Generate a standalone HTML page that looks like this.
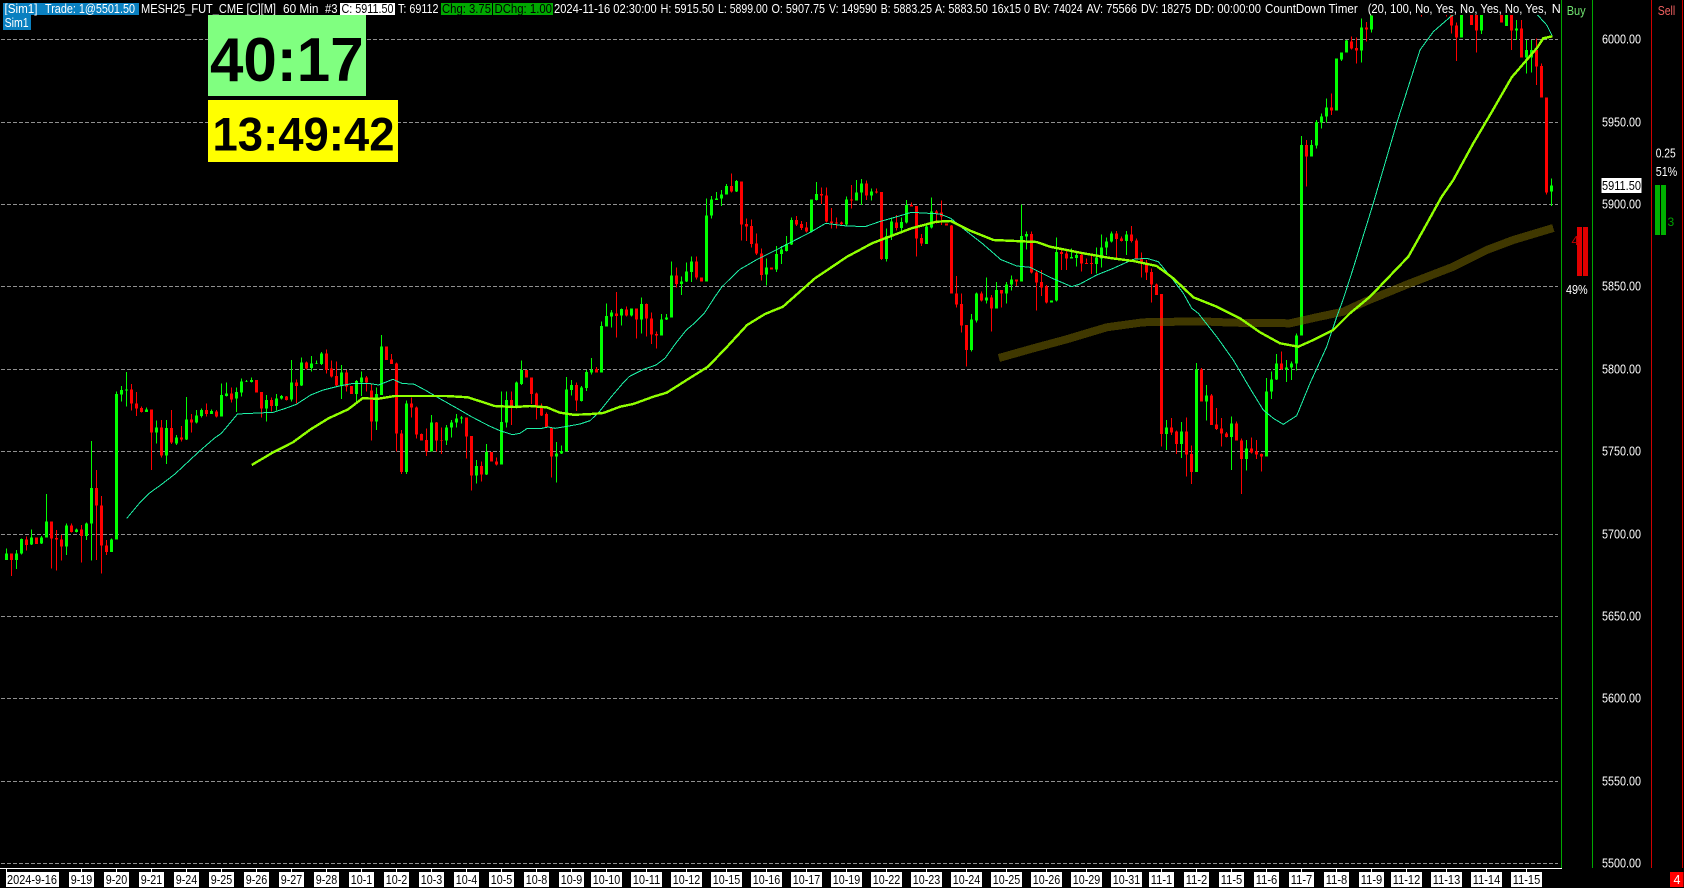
<!DOCTYPE html>
<html><head><meta charset="utf-8"><title>MESH25 chart</title>
<style>
html,body{margin:0;padding:0;background:#000;width:1684px;height:888px;overflow:hidden}
svg{display:block;position:absolute;left:0;top:0}
text{font-family:"Liberation Sans",sans-serif;font-size:12.5px;fill:#fff}
.c path{vector-effect:non-scaling-stroke;fill:none;stroke-linecap:butt}
.c{shape-rendering:crispEdges}
.gw{stroke:#00ff00;stroke-width:1}.gb{stroke:#00ff00;stroke-width:3}
.rw{stroke:#ff0000;stroke-width:1}.rb{stroke:#ff0000;stroke-width:3}
.k text{fill:#000}
</style></head><body>
<svg width="1684" height="888" viewBox="0 0 1684 888" xmlns="http://www.w3.org/2000/svg">
<defs>
<clipPath id="ch"><rect x="1" y="15" width="1560" height="853"/></clipPath>
<clipPath id="ax"><rect x="1593" y="0" width="58" height="868"/></clipPath>
<clipPath id="hd"><rect x="0" y="0" width="1561" height="20"/></clipPath>
</defs>
<rect width="1684" height="888" fill="#000"/>
<!-- grid -->
<path d="M1 39.5H1558M1 122.5H1558M1 204.5H1558M1 286.5H1558M1 369.5H1558M1 451.5H1558M1 534.5H1558M1 616.5H1558M1 698.5H1558M1 781.5H1558M1 863.5H1558" stroke="#909090" stroke-width="1" stroke-dasharray="4 2" fill="none" shape-rendering="crispEdges"/>
<g clip-path="url(#ch)">
<g class="c" transform="translate(0 340) scale(1 .33333)">
<path class="gw" d="M6.5 625V660M16.5 630V687M21.5 595V643M31.5 568V615M41.5 588V612M46.5 462V592M66.5 550V645M76.5 565V578M86.5 548V600M91.5 303V662M111.5 595V636M116.5 155V598M121.5 138V185M126.5 96V200M146.5 202V216M156.5 242V310M166.5 240V372M176.5 285V315M186.5 171V300M196.5 210V250M201.5 206V232M211.5 208V222M221.5 130V230M226.5 128V170M236.5 142V216M241.5 115V170M246.5 120V126M251.5 112V128M266.5 165V245M276.5 162V212M281.5 165V178M291.5 60V185M301.5 52V138M311.5 48V95M316.5 62V72M321.5 36V75M341.5 75V177M356.5 120V185M361.5 95V168M376.5 142V270M381.5 -15V165M406.5 182V402M431.5 225V335M446.5 255V315M451.5 240V292M456.5 222V262M461.5 228V250M476.5 360V430M486.5 312V405M501.5 155V374M506.5 155V262M516.5 125V205M521.5 62V135M556.5 306V428"/>
<path class="gb" d="M6.5 640V660M16.5 640V660M21.5 597V640M31.5 592V613M41.5 592V610M46.5 544V592M66.5 556V620M76.5 568V576M86.5 550V588M91.5 444V550M111.5 598V636M116.5 162V598M121.5 150V164M126.5 148V152M146.5 208V216M156.5 262V278M166.5 264V346M176.5 292V310M186.5 238V298M196.5 226V248M201.5 210V228M211.5 213V222M221.5 165V230M226.5 160V168M236.5 156V176M241.5 124V158M246.5 123V125M251.5 120V126M266.5 180V206M276.5 175V198M281.5 168V176M291.5 127V178M301.5 67V137M311.5 70V84M316.5 69V71M321.5 40V72M341.5 97V137M356.5 123V162M361.5 112V128M376.5 162V244M381.5 20V165M406.5 190V396M431.5 247V334M446.5 262V302M451.5 247V262M456.5 235V248M461.5 232V235M476.5 378V406M486.5 336V404M501.5 246V374M506.5 180V248M516.5 128V198M521.5 90V132M556.5 340V350"/>
<path class="rw" d="M11.5 640V708M26.5 590V632M51.5 544V685M56.5 570V692M61.5 585V662M71.5 550V578M81.5 555V668M96.5 390V660M101.5 468V700M106.5 600V645M131.5 132V212M136.5 156V228M141.5 200V218M151.5 208V390M161.5 240V352M171.5 210V312M181.5 258V305M191.5 222V278M206.5 190V230M216.5 210V232M231.5 142V188M261.5 156V233M271.5 172V215M286.5 168V182M296.5 118V190M306.5 65V88M326.5 28V100M331.5 62V112M336.5 65V140M346.5 90V155M366.5 108V155M371.5 130V302M391.5 42V72M396.5 68V335M401.5 270V402M411.5 172V232M416.5 200V296M421.5 280V302M426.5 265V348M436.5 246V335M441.5 262V342M466.5 232V355M471.5 288V452M481.5 365V425M496.5 352V376M511.5 155V255M531.5 112V192M536.5 158V238M541.5 190V228M546.5 218V262M551.5 262V412"/>
<path class="rb" d="M11.5 640V660M26.5 598V615M36.5 592V612M51.5 544V596M56.5 594V598M61.5 598V620M71.5 556V576M81.5 568V588M96.5 444V497M101.5 496V616M106.5 616V636M131.5 148V190M136.5 190V206M141.5 204V216M151.5 208V278M161.5 262V346M171.5 264V308M181.5 292V298M191.5 238V248M206.5 210V222M216.5 214V230M231.5 160V178M256.5 120V158M261.5 156V206M271.5 180V198M286.5 170V180M296.5 127V138M306.5 67V85M326.5 40V90M331.5 85V110M336.5 108V137M346.5 97V140M351.5 138V162M366.5 112V128M371.5 152V244M386.5 20V60M391.5 58V72M396.5 70V280M401.5 280V396M411.5 190V203M416.5 203V284M421.5 282V302M426.5 300V334M436.5 248V302M441.5 300V302M466.5 232V290M471.5 288V406M481.5 378V404M491.5 336V365M496.5 364V374M511.5 180V198M526.5 90V112M531.5 112V162M536.5 160V198M541.5 198V226M546.5 222V262M551.5 262V350"/>
</g>
<g class="c" transform="translate(0 330) scale(1 .33333)">
<path class="gw" d="M561.5 346V372M566.5 141V365M571.5 150V197M581.5 168V215M586.5 120V183M591.5 84V134"/>
<path class="gb" d="M561.5 363V371M566.5 178V365M571.5 165V180M581.5 172V213M586.5 126V174M591.5 120V128"/>
<path class="rw" d="M576.5 157V243M596.5 111V128"/>
<path class="rb" d="M576.5 165V212M596.5 117V128"/>
</g>
<g class="c" transform="translate(0 160) scale(1 .33333)">
<path class="gw" d="M601.5 484V638M606.5 430V500M611.5 450V503M621.5 445V497M631.5 445V470M641.5 412V520M661.5 462V527M666.5 462V480M671.5 304V472M681.5 350V405M686.5 308V366M691.5 290V366M706.5 115V365M711.5 108V176M716.5 96V120M721.5 90V138M726.5 72V104M736.5 60V96M766.5 295V377M776.5 258V336M781.5 258V312M786.5 228V275M791.5 172V255M811.5 118V217M816.5 66V122M846.5 110V197M856.5 60V122M861.5 57V135M871.5 85V122M886.5 205V305M891.5 172V240M901.5 172V218M906.5 120V190M926.5 195V252M931.5 112V205M971.5 462V575M976.5 397V487M986.5 352V430M996.5 366V446M1006.5 366V430M1011.5 346V392M1021.5 134V365M1026.5 215V268M1056.5 232V424M1071.5 265V296M1076.5 275V320M1096.5 262V340"/>
<path class="gb" d="M601.5 498V638M606.5 468V500M611.5 458V470M621.5 447V467M631.5 445V467M641.5 432V478M661.5 478V527M666.5 472V478M671.5 346V472M681.5 364V372M686.5 334V364M691.5 304V336M706.5 166V365M711.5 118V166M716.5 115V120M721.5 103V116M726.5 78V104M736.5 63V94M766.5 322V344M776.5 282V328M781.5 268V282M786.5 252V273M791.5 180V254M811.5 118V215M816.5 102V120M846.5 118V194M856.5 97V122M861.5 70V98M871.5 95V107M886.5 228V297M891.5 185V228M901.5 186V204M906.5 135V188M926.5 200V252M931.5 154V203M971.5 478V570M976.5 400V482M986.5 412V422M996.5 390V446M1006.5 373V400M1011.5 358V374M1021.5 228V365M1026.5 222V230M1051.5 421V428M1056.5 276V422M1071.5 291V296M1076.5 285V294M1096.5 292V312"/>
<path class="rw" d="M616.5 396V533M626.5 440V470M636.5 445V536M646.5 430V530M651.5 458V552M656.5 515V566M676.5 322V382M696.5 290V358M731.5 40V97M741.5 64V242M746.5 175V243M751.5 178V263M756.5 220V285M761.5 266V362M796.5 168V198M801.5 183V210M806.5 186V217M821.5 82V132M826.5 82V188M831.5 144V205M836.5 172V206M841.5 185V195M851.5 75V145M866.5 62V120M876.5 85V100M881.5 96V300M896.5 165V212M911.5 128V140M916.5 138V290M921.5 222V258M936.5 150V190M941.5 122V195M951.5 195V400M956.5 348V442M961.5 400V518M966.5 495V620M981.5 395V425M991.5 405V515M1001.5 390V442M1016.5 358V378M1031.5 215V340M1036.5 330V452M1041.5 330V408M1046.5 375V430M1061.5 270V330M1066.5 272V330M1081.5 280V335M1086.5 295V312M1091.5 285V342"/>
<path class="rb" d="M616.5 460V468M626.5 448V467M636.5 445V478M646.5 432V475M651.5 475V524M656.5 522V526M676.5 346V372M696.5 304V352M701.5 352V364M731.5 78V95M741.5 64V194M746.5 192V200M751.5 198V252M756.5 250V280M761.5 280V345M771.5 322V328M796.5 180V194M801.5 192V204M806.5 202V215M821.5 102V107M826.5 106V185M831.5 184V189M836.5 188V191M841.5 188V192M851.5 118V122M866.5 70V106M876.5 94V98M881.5 96V297M896.5 187V204M911.5 135V140M916.5 138V236M921.5 234V251M936.5 154V160M941.5 157V170M946.5 190V197M951.5 196V400M956.5 400V434M961.5 432V497M966.5 495V570M981.5 400V422M991.5 412V446M1001.5 390V400M1016.5 358V364M1031.5 222V338M1036.5 338V368M1041.5 366V382M1046.5 380V428M1061.5 276V282M1066.5 280V296M1081.5 285V310M1086.5 309V312M1091.5 309V312"/>
</g>
<g class="c" transform="translate(0 180) scale(1 .33333)">
<path class="gw" d="M1101.5 163V262M1106.5 172V225M1111.5 155V187M1126.5 153V225M1166.5 720V810M1181.5 726V834M1196.5 549V876M1206.5 615V722M1231.5 709V870M1246.5 780V872M1266.5 594V830M1271.5 574V657M1276.5 522V600M1286.5 540V606M1291.5 545V600M1296.5 460V572"/>
<path class="gb" d="M1101.5 202V235M1106.5 184V203M1111.5 160V185M1126.5 163V183M1166.5 742V762M1181.5 754V792M1196.5 568V876M1206.5 646V665M1231.5 730V771M1246.5 805V837M1266.5 634V830M1271.5 598V635M1276.5 550V598M1286.5 562V568M1291.5 550V563M1296.5 466V551"/>
<path class="rw" d="M1116.5 153V235M1121.5 170V185M1131.5 138V187M1136.5 175V238M1141.5 217V293M1146.5 240V300M1151.5 266V368M1156.5 310V345M1161.5 342V800M1171.5 714V765M1176.5 752V822M1186.5 712V890M1191.5 796V912M1201.5 564V665M1211.5 642V735M1216.5 684V750M1221.5 714V800M1226.5 756V773M1236.5 724V782M1241.5 775V942M1251.5 772V820M1256.5 780V837M1261.5 820V875M1281.5 514V570"/>
<path class="rb" d="M1116.5 160V177M1121.5 175V183M1131.5 163V183M1136.5 181V235M1141.5 235V248M1146.5 248V278M1151.5 276V314M1156.5 313V345M1161.5 342V762M1171.5 742V758M1176.5 755V792M1186.5 754V824M1191.5 822V876M1201.5 568V665M1211.5 646V735M1216.5 733V747M1221.5 745V761M1226.5 760V771M1236.5 730V782M1241.5 781V837M1251.5 805V818M1256.5 814V824M1261.5 822V830M1281.5 550V567"/>
</g>
<g class="c" transform="scale(1 .33333)">
<path class="gw" d="M1301.5 408V1007M1311.5 420V470M1316.5 360V446M1321.5 340V386M1326.5 295V367M1336.5 175V332M1341.5 158V183M1346.5 120V158M1361.5 55V188M1371.5 46V98M1461.5 45V113M1481.5 45V102M1506.5 45V78M1516.5 60V120M1526.5 120V220M1531.5 120V218M1551.5 535V618"/>
<path class="gb" d="M1301.5 435V1007M1311.5 435V470M1316.5 366V437M1321.5 350V367M1326.5 322V350M1336.5 175V332M1341.5 158V178M1346.5 122V158M1361.5 82V152M1371.5 46V88M1461.5 45V113M1481.5 45V92M1506.5 45V78M1516.5 85V92M1526.5 150V172M1531.5 150V172M1551.5 556V575"/>
<path class="rw" d="M1306.5 420V560M1331.5 280V345M1351.5 110V148M1356.5 112V190M1366.5 66V125M1421.5 45V50M1446.5 45V50M1451.5 45V100M1456.5 68V183M1471.5 45V75M1476.5 45V158M1501.5 45V68M1511.5 45V150M1521.5 60V172M1536.5 115V255M1541.5 190V293M1546.5 292V583"/>
<path class="rb" d="M1306.5 435V470M1331.5 322V332M1351.5 124V146M1356.5 144V152M1366.5 82V88M1451.5 45V77M1456.5 77V113M1471.5 45V75M1476.5 45V92M1501.5 45V68M1511.5 45V92M1521.5 85V172M1536.5 150V200M1541.5 198V293M1546.5 292V578"/>
</g>
<!-- curves -->
<polyline shape-rendering="crispEdges" fill="none" stroke="#807000" stroke-opacity=".5" stroke-width="8" points="998.9,358 1033.3,348.3 1066.7,339.3 1106.7,327.3 1143.3,322.3 1200,321.3 1233.3,322.7 1290,323.3 1316.7,317.3 1343.3,311.7 1366.7,301 1408.3,284 1453.3,266.7 1486.7,250 1513.3,240 1553.3,228"/>
<polyline shape-rendering="crispEdges" fill="none" stroke="#1ef2a8" stroke-width="1" points="126.8,518.3 139.3,503.3 150,492.7 160.7,485 175,474 185.7,464 200,450.7 214.3,438.3 221.4,433.3 237.5,414 273.2,412.3 285.7,408.3 296.4,404.3 310.7,395 323.2,390 339.3,386 353.6,383.3 367.9,383.3 378.6,385 392.9,379.3 401.8,383.3 414.3,384.3 425,390 439.3,398.3 457,408.3 471.4,416.7 489.3,426 500,430.7 512.5,434.7 520,433.3 527.3,428.3 542,428.3 548,427 555,428.3 565,426.7 580,424 590,420.7 599.3,411.7 610,398.3 623.3,382.7 629,376.7 643.6,369.3 656,365 665,358.3 675.7,343.3 686.4,330 695.4,322.3 704.3,313.3 715,296.7 722,286.7 734.6,274.3 740,269.3 757.9,259 779.3,248.3 811.4,231.7 825.7,223.3 843.6,225.7 865,226.7 879.3,221.7 897,216.7 911.4,212.3 940,214 950.7,218.3 965,230 982.9,244 1000.7,259.5 1016.7,266 1030,267.3 1050,277.3 1071.7,286.7 1080,284 1096.7,275 1113.3,268.3 1133.3,259.3 1146.7,258.3 1158.3,261.7 1173.3,280 1183.3,293.3 1191.7,308.3 1198.3,313.3 1216.7,336.7 1233.3,360 1250,388.3 1263.3,410 1273.3,418.3 1283.3,424.3 1296.7,415.7 1310,383.3 1326.7,346.7 1336.7,317 1343.3,299 1353.3,268 1373.3,203.3 1396.7,123.3 1420,50 1433.3,31.7 1451.7,15.7 1465,8 1525,8 1536.7,14 1546.7,25 1552.3,36"/>
<polyline shape-rendering="crispEdges" fill="none" stroke="#90ff00" stroke-width="2.4" points="251.8,465 271.4,453.3 292.9,442.3 310.7,429.3 328.6,418.3 348.2,409.3 362.5,398.3 378.6,398.7 394.6,396 446.4,396 467.9,397.3 494.6,406 514.3,407 530,406 546.7,407.3 560,412.7 573.3,414.7 588.3,414.3 603.3,413 620,406.7 633.3,404 653.3,396.7 666.7,392.7 686.7,380 707.9,366.7 725.7,348.3 747.1,325 765,314 782.9,306.7 815,278.3 847.1,256.7 872,243.3 911.4,228.3 936.4,221.7 950.7,221 968.6,230 993.6,240 1036.7,242 1050,246.7 1083.3,253.3 1110,258 1133.3,261 1156.7,266 1173.3,278.3 1193.3,297.3 1216.7,306.7 1240,318.3 1260,332.3 1280,343.3 1298.3,346.7 1313.3,340 1333.3,330 1350,313.3 1370,296.7 1408.3,256.7 1423.3,230 1441.7,196.7 1453.3,180 1473.3,143.3 1490,115 1511.7,77.3 1536.7,48.3 1543.3,38.3 1552.3,36.3"/>
</g>
<!-- axes -->
<g shape-rendering="crispEdges">
<path d="M1561.5 0V868M1592.5 0V868" stroke="#00a800" fill="none"/>
<path d="M1651.5 0V868M1682.5 0V868" stroke="#d00000" fill="none"/>
<path d="M0 868.5H1562M6.5 868V872M81.5 868V872M116.5 868V872M151.5 868V872M186.5 868V872M221.5 868V872M256.5 868V872M291.5 868V872M326.5 868V872M361.5 868V872M396.5 868V872M431.5 868V872M466.5 868V872M501.5 868V872M536.5 868V872M571.5 868V872M606.5 868V872M646.5 868V872M686.5 868V872M726.5 868V872M766.5 868V872M806.5 868V872M846.5 868V872M886.5 868V872M926.5 868V872M966.5 868V872M1006.5 868V872M1046.5 868V872M1086.5 868V872M1126.5 868V872M1161.5 868V872M1196.5 868V872M1231.5 868V872M1266.5 868V872M1301.5 868V872M1336.5 868V872M1371.5 868V872M1406.5 868V872M1446.5 868V872M1486.5 868V872M1526.5 868V872" stroke="#fff" fill="none"/>
</g>
<!-- header -->
<g clip-path="url(#hd)">
<rect x="3" y="3" width="136" height="12" fill="#0a80c0"/>
<rect x="340" y="3" width="55" height="12" fill="#fff"/>
<rect x="441" y="3" width="51" height="12" fill="#00a800"/>
<rect x="493" y="3" width="60" height="12" fill="#00a800"/>
<text x="4.5" y="13" textLength="33" lengthAdjust="spacingAndGlyphs">[Sim1]</text>
<text x="45" y="13" textLength="90" lengthAdjust="spacingAndGlyphs">Trade: 1@5501.50</text>
<text x="141" y="13" textLength="135" lengthAdjust="spacingAndGlyphs">MESH25_FUT_CME [C][M]</text>
<text x="283" y="13" textLength="35.5" lengthAdjust="spacingAndGlyphs">60 Min</text>
<text x="325" y="13" textLength="12.5" lengthAdjust="spacingAndGlyphs">#3</text>
<text x="341.5" y="13" textLength="52" lengthAdjust="spacingAndGlyphs" style="fill:#000">C: 5911.50</text>
<text x="398" y="13" textLength="40.5" lengthAdjust="spacingAndGlyphs">T: 69112</text>
<text x="442" y="13" textLength="49" lengthAdjust="spacingAndGlyphs" style="fill:#000">Chg: 3.75</text>
<text x="494.5" y="13" textLength="57.5" lengthAdjust="spacingAndGlyphs" style="fill:#000">DChg: 1.00</text>
<text x="554" y="13" textLength="102.7" lengthAdjust="spacingAndGlyphs">2024-11-16 02:30:00</text>
<text x="660.5" y="13" textLength="53.5" lengthAdjust="spacingAndGlyphs">H: 5915.50</text>
<text x="718" y="13" textLength="49.7" lengthAdjust="spacingAndGlyphs">L: 5899.00</text>
<text x="771.5" y="13" textLength="53.5" lengthAdjust="spacingAndGlyphs">O: 5907.75</text>
<text x="829" y="13" textLength="47.8" lengthAdjust="spacingAndGlyphs">V: 149590</text>
<text x="880.6" y="13" textLength="51.4" lengthAdjust="spacingAndGlyphs">B: 5883.25</text>
<text x="935" y="13" textLength="52.8" lengthAdjust="spacingAndGlyphs">A: 5883.50</text>
<text x="991.6" y="13" textLength="38.4" lengthAdjust="spacingAndGlyphs">16x15 0</text>
<text x="1033.7" y="13" textLength="49" lengthAdjust="spacingAndGlyphs">BV: 74024</text>
<text x="1086.5" y="13" textLength="50.5" lengthAdjust="spacingAndGlyphs">AV: 75566</text>
<text x="1141" y="13" textLength="50" lengthAdjust="spacingAndGlyphs">DV: 18275</text>
<text x="1195" y="13" textLength="66" lengthAdjust="spacingAndGlyphs">DD: 00:00:00</text>
<text x="1265" y="13" textLength="92.7" lengthAdjust="spacingAndGlyphs">CountDown Timer</text>
<text x="1367.7" y="13" textLength="179" lengthAdjust="spacingAndGlyphs">(20, 100, No, Yes, No, Yes, No, Yes,</text>
<text x="1551.7" y="13" textLength="16" lengthAdjust="spacingAndGlyphs">No</text>
</g>
<rect x="3" y="15" width="28" height="15" fill="#0a80c0"/>
<text x="4.6" y="27" textLength="24" lengthAdjust="spacingAndGlyphs">Sim1</text>
<!-- timers -->
<rect x="208" y="15" width="158" height="81" fill="#80ff80"/>
<text x="210" y="81" textLength="153.6" lengthAdjust="spacingAndGlyphs" style="font-size:62px;font-weight:bold;fill:#000">40:17</text>
<rect x="208" y="100" width="190" height="62" fill="#ffff00"/>
<text x="212.5" y="150.7" textLength="182" lengthAdjust="spacingAndGlyphs" style="font-size:47px;font-weight:bold;fill:#000">13:49:42</text>
<!-- price axis -->
<g clip-path="url(#ax)">
<text x="1602" y="43.5" textLength="39" lengthAdjust="spacingAndGlyphs">6000.00</text>
<text x="1602" y="126.5" textLength="39" lengthAdjust="spacingAndGlyphs">5950.00</text>
<text x="1602" y="208.5" textLength="39" lengthAdjust="spacingAndGlyphs">5900.00</text>
<text x="1602" y="290.5" textLength="39" lengthAdjust="spacingAndGlyphs">5850.00</text>
<text x="1602" y="373.5" textLength="39" lengthAdjust="spacingAndGlyphs">5800.00</text>
<text x="1602" y="455.5" textLength="39" lengthAdjust="spacingAndGlyphs">5750.00</text>
<text x="1602" y="538.5" textLength="39" lengthAdjust="spacingAndGlyphs">5700.00</text>
<text x="1602" y="620.5" textLength="39" lengthAdjust="spacingAndGlyphs">5650.00</text>
<text x="1602" y="702.5" textLength="39" lengthAdjust="spacingAndGlyphs">5600.00</text>
<text x="1602" y="785.5" textLength="39" lengthAdjust="spacingAndGlyphs">5550.00</text>
<text x="1602" y="867.5" textLength="39" lengthAdjust="spacingAndGlyphs">5500.00</text>
<rect x="1601.5" y="178" width="40" height="15" fill="#fff"/>
<text x="1602" y="190" textLength="39" lengthAdjust="spacingAndGlyphs" style="fill:#000">5911.50</text>
</g>
<!-- order flow columns -->
<text x="1566.7" y="15" textLength="19" lengthAdjust="spacingAndGlyphs" style="fill:#6fe06f">Buy</text>
<text x="1657.7" y="15" textLength="17.5" lengthAdjust="spacingAndGlyphs" style="fill:#f06060">Sell</text>
<text x="1566" y="294" textLength="21.7" lengthAdjust="spacingAndGlyphs">49%</text>
<text x="1655.7" y="176" textLength="21.6" lengthAdjust="spacingAndGlyphs">51%</text>
<text x="1655.7" y="157.7" textLength="20" lengthAdjust="spacingAndGlyphs">0.25</text>
<g shape-rendering="crispEdges">
<rect x="1577" y="227" width="5" height="49" fill="#e00000"/>
<rect x="1583" y="227" width="5" height="49" fill="#e00000"/>
<rect x="1655" y="185" width="5" height="50" fill="#00b000"/>
<rect x="1661" y="185" width="5" height="50" fill="#00b000"/>
</g>
<text x="1571.5" y="245" style="fill:#c00000;font-size:13px">4</text>
<text x="1667.5" y="226" style="fill:#00a000;font-size:12px">3</text>
<!-- date axis -->
<g class="k">
<rect x="6" y="872" width="53" height="15" fill="#fff"/><text x="7" y="884" textLength="50" lengthAdjust="spacingAndGlyphs">2024-9-16</text>
<g fill="#fff">
<rect x="69" y="872" width="25" height="15"/><rect x="104" y="872" width="25" height="15"/><rect x="139" y="872" width="25" height="15"/><rect x="174" y="872" width="25" height="15"/><rect x="209" y="872" width="25" height="15"/><rect x="244" y="872" width="25" height="15"/><rect x="279" y="872" width="25" height="15"/><rect x="314" y="872" width="25" height="15"/><rect x="349" y="872" width="25" height="15"/><rect x="384" y="872" width="25" height="15"/><rect x="419" y="872" width="25" height="15"/><rect x="454" y="872" width="25" height="15"/><rect x="489" y="872" width="25" height="15"/><rect x="524" y="872" width="25" height="15"/><rect x="559" y="872" width="25" height="15"/>
<rect x="591" y="872" width="31" height="15"/><rect x="631" y="872" width="31" height="15"/><rect x="671" y="872" width="31" height="15"/><rect x="711" y="872" width="31" height="15"/><rect x="751" y="872" width="31" height="15"/><rect x="791" y="872" width="31" height="15"/><rect x="831" y="872" width="31" height="15"/><rect x="871" y="872" width="31" height="15"/><rect x="911" y="872" width="31" height="15"/><rect x="951" y="872" width="31" height="15"/><rect x="991" y="872" width="31" height="15"/><rect x="1031" y="872" width="31" height="15"/><rect x="1071" y="872" width="31" height="15"/><rect x="1111" y="872" width="31" height="15"/>
<rect x="1149" y="872" width="25" height="15"/><rect x="1184" y="872" width="25" height="15"/><rect x="1219" y="872" width="25" height="15"/><rect x="1254" y="872" width="25" height="15"/><rect x="1289" y="872" width="25" height="15"/><rect x="1324" y="872" width="25" height="15"/><rect x="1359" y="872" width="25" height="15"/>
<rect x="1391" y="872" width="31" height="15"/><rect x="1431" y="872" width="31" height="15"/><rect x="1471" y="872" width="31" height="15"/><rect x="1511" y="872" width="31" height="15"/>
</g>
<g text-anchor="middle">
<text x="81.5" y="884" textLength="21.5" lengthAdjust="spacingAndGlyphs">9-19</text><text x="116.5" y="884" textLength="21.5" lengthAdjust="spacingAndGlyphs">9-20</text><text x="151.5" y="884" textLength="21.5" lengthAdjust="spacingAndGlyphs">9-21</text><text x="186.5" y="884" textLength="21.5" lengthAdjust="spacingAndGlyphs">9-24</text><text x="221.5" y="884" textLength="21.5" lengthAdjust="spacingAndGlyphs">9-25</text><text x="256.5" y="884" textLength="21.5" lengthAdjust="spacingAndGlyphs">9-26</text><text x="291.5" y="884" textLength="21.5" lengthAdjust="spacingAndGlyphs">9-27</text><text x="326.5" y="884" textLength="21.5" lengthAdjust="spacingAndGlyphs">9-28</text><text x="361.5" y="884" textLength="21.5" lengthAdjust="spacingAndGlyphs">10-1</text><text x="396.5" y="884" textLength="21.5" lengthAdjust="spacingAndGlyphs">10-2</text><text x="431.5" y="884" textLength="21.5" lengthAdjust="spacingAndGlyphs">10-3</text><text x="466.5" y="884" textLength="21.5" lengthAdjust="spacingAndGlyphs">10-4</text><text x="501.5" y="884" textLength="21.5" lengthAdjust="spacingAndGlyphs">10-5</text><text x="536.5" y="884" textLength="21.5" lengthAdjust="spacingAndGlyphs">10-8</text><text x="571.5" y="884" textLength="21.5" lengthAdjust="spacingAndGlyphs">10-9</text>
<text x="606.5" y="884" textLength="27.5" lengthAdjust="spacingAndGlyphs">10-10</text><text x="646.5" y="884" textLength="27.5" lengthAdjust="spacingAndGlyphs">10-11</text><text x="686.5" y="884" textLength="27.5" lengthAdjust="spacingAndGlyphs">10-12</text><text x="726.5" y="884" textLength="27.5" lengthAdjust="spacingAndGlyphs">10-15</text><text x="766.5" y="884" textLength="27.5" lengthAdjust="spacingAndGlyphs">10-16</text><text x="806.5" y="884" textLength="27.5" lengthAdjust="spacingAndGlyphs">10-17</text><text x="846.5" y="884" textLength="27.5" lengthAdjust="spacingAndGlyphs">10-19</text><text x="886.5" y="884" textLength="27.5" lengthAdjust="spacingAndGlyphs">10-22</text><text x="926.5" y="884" textLength="27.5" lengthAdjust="spacingAndGlyphs">10-23</text><text x="966.5" y="884" textLength="27.5" lengthAdjust="spacingAndGlyphs">10-24</text><text x="1006.5" y="884" textLength="27.5" lengthAdjust="spacingAndGlyphs">10-25</text><text x="1046.5" y="884" textLength="27.5" lengthAdjust="spacingAndGlyphs">10-26</text><text x="1086.5" y="884" textLength="27.5" lengthAdjust="spacingAndGlyphs">10-29</text><text x="1126.5" y="884" textLength="27.5" lengthAdjust="spacingAndGlyphs">10-31</text>
<text x="1161.5" y="884" textLength="21.5" lengthAdjust="spacingAndGlyphs">11-1</text><text x="1196.5" y="884" textLength="21.5" lengthAdjust="spacingAndGlyphs">11-2</text><text x="1231.5" y="884" textLength="21.5" lengthAdjust="spacingAndGlyphs">11-5</text><text x="1266.5" y="884" textLength="21.5" lengthAdjust="spacingAndGlyphs">11-6</text><text x="1301.5" y="884" textLength="21.5" lengthAdjust="spacingAndGlyphs">11-7</text><text x="1336.5" y="884" textLength="21.5" lengthAdjust="spacingAndGlyphs">11-8</text><text x="1371.5" y="884" textLength="21.5" lengthAdjust="spacingAndGlyphs">11-9</text>
<text x="1406.5" y="884" textLength="27.5" lengthAdjust="spacingAndGlyphs">11-12</text><text x="1446.5" y="884" textLength="27.5" lengthAdjust="spacingAndGlyphs">11-13</text><text x="1486.5" y="884" textLength="27.5" lengthAdjust="spacingAndGlyphs">11-14</text><text x="1526.5" y="884" textLength="27.5" lengthAdjust="spacingAndGlyphs">11-15</text>
</g>
</g>
<rect x="1670" y="872" width="13.5" height="15" fill="#ff0000"/>
<text x="1673.5" y="884">4</text>
</svg>
</body></html>
